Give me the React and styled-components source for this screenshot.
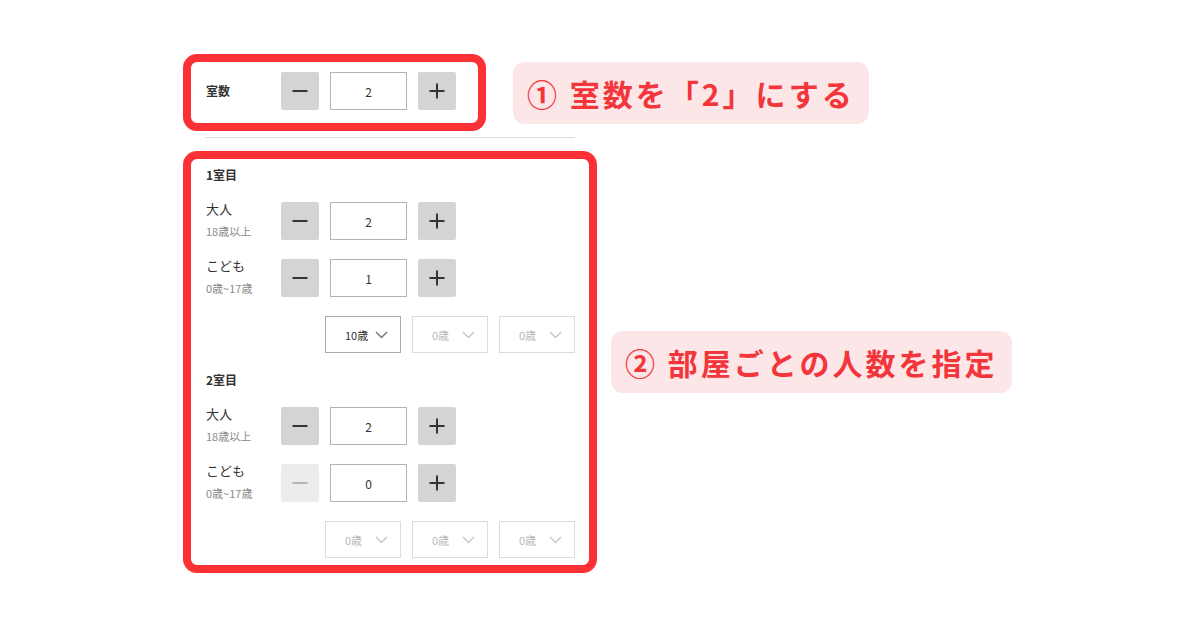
import React from 'react';
import styled, { createGlobalStyle } from 'styled-components';

const GlobalStyle = createGlobalStyle`
	body {
		margin: 0;
		background: #fff;
		font-family: "Noto Sans CJK JP", "Noto Sans", sans-serif;
		color: #333;
	}
`;

const rooms = [
	{ title: '1室目', adults: 2, children: 1, ages: ['10歳', '0歳', '0歳'], activeAges: 1 },
	{ title: '2室目', adults: 2, children: 0, ages: ['0歳', '0歳', '0歳'], activeAges: 0 },
];

const MinusIcon = () => (
	<svg width="16" height="16" viewBox="0 0 16 16">
		<line x1="0.5" y1="8" x2="15.5" y2="8" stroke="currentColor" strokeWidth="2" />
	</svg>
);

const PlusIcon = () => (
	<svg width="16" height="16" viewBox="0 0 16 16">
		<line x1="0.5" y1="8" x2="15.5" y2="8" stroke="currentColor" strokeWidth="2" />
		<line x1="8" y1="0.5" x2="8" y2="15.5" stroke="currentColor" strokeWidth="2" />
	</svg>
);

const Chevron = () => (
	<svg width="13" height="8" viewBox="0 0 13 8">
		<polyline points="1,1 6.5,6.5 12,1" fill="none" stroke="currentColor" strokeWidth="1.5" />
	</svg>
);

const Stepper = ({ value, minDisabled }) => (
	<StepperWrap>
		<StepButton disabled={minDisabled}>
			<MinusIcon />
		</StepButton>
		<CountBox>{value}</CountBox>
		<StepButton>
			<PlusIcon />
		</StepButton>
	</StepperWrap>
);

const GuestRow = ({ label, sub, value, minDisabled }) => (
	<Row>
		<LabelBlock>
			<Label>{label}</Label>
			<SubLabel>{sub}</SubLabel>
		</LabelBlock>
		<Stepper value={value} minDisabled={minDisabled} />
	</Row>
);

const App = () => {
	return (
		<Page>
			<GlobalStyle />
			<AnnotatedRow>
				<RedFrame>
					<RoomCountInner>
						<BoldLabel>室数</BoldLabel>
						<Stepper value={2} />
					</RoomCountInner>
				</RedFrame>
				<Callout offset={27}>① 室数を「2」にする</Callout>
			</AnnotatedRow>
			<Divider />
			<AnnotatedRow>
				<RedFrame>
					<RoomsInner>
						{rooms.map((room, i) => (
							<Room key={`room-${i}`}>
								<RoomTitle>{room.title}</RoomTitle>
								<GuestRow label="大人" sub="18歳以上" value={room.adults} />
								<GuestRow
									label="こども"
									sub="0歳~17歳"
									value={room.children}
									minDisabled={room.children === 0}
								/>
								<AgeRow>
									{room.ages.map((age, j) => (
										<AgeSelect key={`age-${j}`} active={j < room.activeAges}>
											<span>{age}</span>
											<Chevron />
										</AgeSelect>
									))}
								</AgeRow>
							</Room>
						))}
					</RoomsInner>
				</RedFrame>
				<Callout offset={14}>② 部屋ごとの人数を指定</Callout>
			</AnnotatedRow>
		</Page>
	);
};

const Page = styled.div`
	width: 1200px;
	height: 630px;
	box-sizing: border-box;
	padding: 54px 0 0 183px;
	display: flex;
	flex-direction: column;
	align-items: flex-start;
`;

const AnnotatedRow = styled.div`
	display: flex;
	align-items: center;
`;

const RedFrame = styled.div`
	border: 8px solid #fc3136;
	border-radius: 14px;
	background: #fff;
`;

const RoomCountInner = styled.div`
	width: 287px;
	height: 61px;
	box-sizing: border-box;
	padding: 10px 0 0 15px;
	display: flex;
	align-items: flex-start;
`;

const BoldLabel = styled.div`
	width: 75px;
	font-size: 12px;
	line-height: 38px;
	font-weight: 700;
	color: #333;
`;

const Callout = styled.div`
	margin-left: ${props => props.offset}px;
	background: #fde6e7;
	border-radius: 12px;
	padding: 0 14px;
	height: 62px;
	display: flex;
	align-items: center;
	font-size: 30px;
	font-weight: 700;
	letter-spacing: 3px;
	color: #f2363b;
	white-space: nowrap;
`;

const Divider = styled.div`
	width: 370px;
	height: 1px;
	background: #dedede;
	margin: 6px 0 13px 22px;
`;

const RoomsInner = styled.div`
	width: 398px;
	box-sizing: border-box;
	padding: 8px 14px 7px 15px;
	display: flex;
	flex-direction: column;
	gap: 19px;
`;

const Room = styled.div`
	display: flex;
	flex-direction: column;
	gap: 19px;
`;

const RoomTitle = styled.div`
	font-size: 12px;
	line-height: 16px;
	font-weight: 700;
	color: #333;
`;

const Row = styled.div`
	display: flex;
	align-items: flex-start;
	height: 38px;
`;

const LabelBlock = styled.div`
	width: 75px;
	display: flex;
	flex-direction: column;
	gap: 6px;
	margin-top: -1px;
`;

const Label = styled.div`
	font-size: 13px;
	line-height: 16px;
	color: #333;
`;

const SubLabel = styled.div`
	font-size: 11px;
	line-height: 16px;
	color: #8a8a8a;
`;

const StepperWrap = styled.div`
	display: flex;
	gap: 11px;
`;

const StepButton = styled.div`
	width: 38px;
	height: 38px;
	display: flex;
	align-items: center;
	justify-content: center;
	background: ${props => (props.disabled ? '#ececec' : '#d4d4d4')};
	color: ${props => (props.disabled ? '#b4b4b4' : '#333')};
	border-radius: 2px;
`;

const CountBox = styled.div`
	width: 77px;
	height: 38px;
	box-sizing: border-box;
	border: 1px solid #b4b4b4;
	display: flex;
	align-items: center;
	justify-content: center;
	font-size: 12px;
	color: #333;
`;

const AgeRow = styled.div`
	display: flex;
	justify-content: flex-end;
	gap: 11px;
`;

const AgeSelect = styled.div`
	width: 76px;
	height: 37px;
	box-sizing: border-box;
	border: 1px solid ${props => (props.active ? '#aaa' : '#dcdcdc')};
	display: flex;
	align-items: center;
	justify-content: space-between;
	padding: 0 12px 0 19px;
	font-size: 11px;
	color: ${props => (props.active ? '#333' : '#b8b8b8')};
	svg {
		color: ${props => (props.active ? '#777' : '#c8c8c8')};
	}
`;

export default App;
